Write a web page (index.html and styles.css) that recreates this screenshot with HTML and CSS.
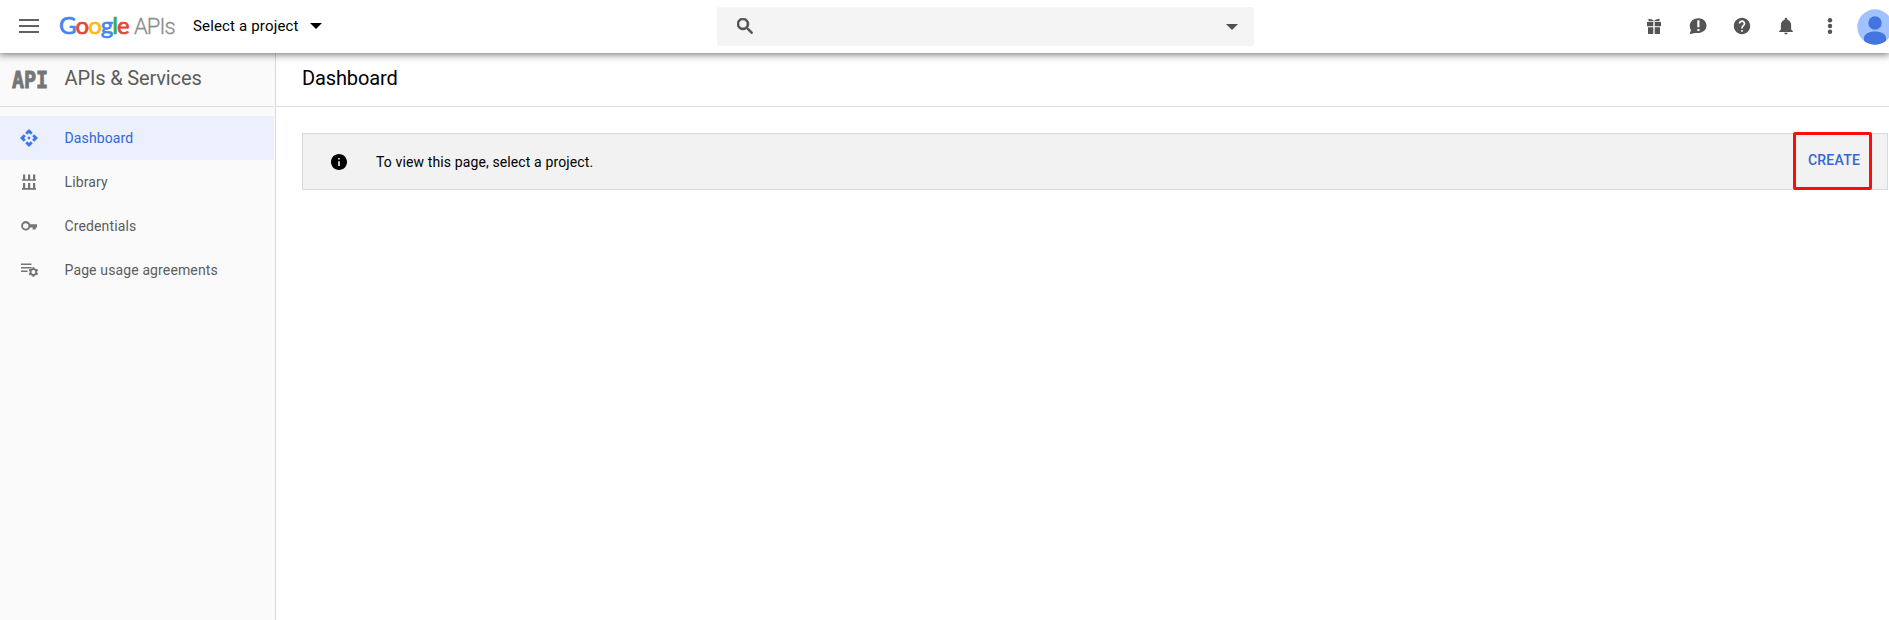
FILE: index.html
```html
<!DOCTYPE html>
<html lang="en">
<head>
<meta charset="utf-8">
<title>APIs &amp; Services</title>
<link rel="stylesheet" href="styles.css">
</head>
<body>
<header class="topbar">
  <svg class="menu" viewBox="0 0 20 14"><path d="M0 0h20v2H0zM0 6h20v2H0zM0 12h20v2H0z"/></svg>
  <div class="logo"><span class="google"><span class="blue">G</span><span class="red">o</span><span class="yellow">o</span><span class="blue">g</span><span class="green">l</span><span class="red">e</span></span><span class="apis">APIs</span></div>
  <div class="project"><span class="project-name">Select a project</span><svg class="caret" viewBox="0 0 12 6"><path d="M0 0h12L6 6z"/></svg></div>
  <div class="search">
    <svg class="search-icon" viewBox="3 3 17.5 17.5"><path stroke="currentColor" stroke-width=".8" d="M15.5 14h-.79l-.28-.27A6.471 6.471 0 0 0 16 9.5 6.5 6.5 0 1 0 9.5 16c1.61 0 3.09-.59 4.23-1.57l.27.28v.79l5 4.99L20.49 19l-4.99-5zm-6 0C7.01 14 5 11.99 5 9.5S7.01 5 9.5 5 14 7.01 14 9.5 11.99 14 9.5 14z"/></svg>
    <svg class="search-caret" viewBox="0 0 12 6"><path d="M0 0h12L6 6z"/></svg>
  </div>
  <div class="tools">
    <svg viewBox="0 0 18 18"><path d="M2 5h6.3v4.3H2zM9.7 5H16v4.3H9.700zM3 10.300h5.300V17H3zM9.700 10.300H15V17H9.700zM3.500 1.700L7 2.600 9 4l2-1.400 3.500-.9v2.500h-11z"/></svg>
    <svg viewBox="0 0 18 18"><path fill-rule="evenodd" d="M9.500 1.200c4.500 0 8 3.200 8 7.400s-3.500 7.300-8 7.300H5.800L.5 17.300l1.500-4C1.300 12 .8 10.400.8 8.600c0-4.200 4.200-7.400 8.700-7.400zM8.300 3.200v7.100h2.200V3.200zM8.300 11.900V14h2.200v-2.100z"/></svg>
    <svg viewBox="1 1 22 22"><path d="M12 2C6.480 2 2 6.480 2 12s4.480 10 10 10 10-4.480 10-10S17.520 2 12 2zm1 17h-2v-2h2v2zm2.070-7.750l-.9.920C13.450 12.900 13 13.500 13 15h-2v-.5c0-1.100.450-2.100 1.170-2.830l1.240-1.260c.370-.360.590-.860.590-1.410 0-1.100-.9-2-2-2s-2 .9-2 2H8c0-2.210 1.790-4 4-4s4 1.790 4 4c0 .880-.360 1.680-.930 2.250z"/></svg>
    <svg viewBox="1.500 1.500 21 21"><path d="M12 22c1.100 0 2-.9 2-2h-4c0 1.100.890 2 2 2zm6-6v-5c0-3.070-1.640-5.640-4.500-6.320V4c0-.830-.670-1.500-1.500-1.500s-1.500.670-1.500 1.500v.680C7.630 5.360 6 7.920 6 11v5l-2 2v1h16v-1l-2-2z"/></svg>
    <svg viewBox="0 0 18 18"><circle cx="9" cy="3.300" r="2.200"/><circle cx="9" cy="9" r="2.200"/><circle cx="9" cy="14.700" r="2.200"/></svg>
  </div>
  <svg class="avatar" viewBox="0 0 36 36"><defs><clipPath id="disc"><circle cx="18" cy="18" r="17.700"/></clipPath></defs><circle cx="18" cy="18" r="17.700" fill="#a0c3ff"/><g fill="#4374e0" clip-path="url(#disc)"><circle cx="18" cy="14" r="6.700"/><path d="M7 40V29c0-4 5-6.500 11-6.500S29 25 29 29v11z"/></g></svg>
</header>
<div class="body">
  <aside class="sidebar">
    <div class="side-head"><span class="api-mark">API</span><span class="side-title">APIs &amp; Services</span></div>
    <nav class="nav">
      <a class="item active"><svg viewBox="1 1 22 22"><path d="M14 12l-2 2-2-2 2-2 2 2zm-2-6l2.120 2.120 2.500-2.500L12 1 7.380 5.620l2.500 2.500L12 6zm-6 6l2.120-2.120-2.500-2.500L1 12l4.620 4.620 2.500-2.500L6 12zm12 0l-2.120 2.120 2.500 2.500L23 12l-4.620-4.620-2.500 2.500L18 12zm-6 6l-2.120-2.120-2.500 2.500L12 23l4.620-4.620-2.500-2.500L12 18z"/></svg><span>Dashboard</span></a>
      <a class="item"><svg viewBox="0 0 18 18"><path d="M3 1.400h2.200v5H3zM8 1.400h2.200v5H8zM13 1.400h2.200v5H13zM2 6.200h14v1.600H2zM3 10h2.200v5H3zM8 10h2.200v5H8zM13 10h2.200v5H13zM2 15h14v1.800H2z"/></svg><span>Library</span></a>
      <a class="item"><svg viewBox="0 0 18 18"><path fill-rule="evenodd" d="M10.200 7.200H17v3.200h-1.200v2.200h-3.200v-2.200h-2.400A4.700 4.700 0 1 1 10.200 7.200zM5.700 6.200a2.700 2.700 0 1 0 0 5.400 2.700 2.700 0 0 0 0-5.400z"/></svg><span>Credentials</span></a>
      <a class="item"><svg viewBox="0 0 18 18"><path d="M1 2.500h10.500V4H1zM1 6h10.500v1.600H1zM1 9.500h6.500v1.600H1z"/><circle cx="13.400" cy="11" r="2.900" fill="none" stroke="currentColor" stroke-width="1.900"/><path d="M12.300 6.300h2.200v2h-2.200zM12.300 13.700h2.200v2h-2.200zM8.700 9.500l1-1.900 1.900 1-1 1.900zM15.200 13.300l1-1.900 1.900 1-1 1.900zM15.200 8.700l1.900-1 1 1.900-1.900 1zM8.700 12.500l1.900-1 1 1.900-1.900 1z"/></svg><span>Page usage agreements</span></a>
    </nav>
  </aside>
  <main class="main">
    <h1 class="title">Dashboard</h1>
    <section class="notice">
      <svg class="info" viewBox="2 2 20 20"><path d="M12 2C6.480 2 2 6.480 2 12s4.480 10 10 10 10-4.480 10-10S17.520 2 12 2zm1 15h-2v-6h2v6zm0-8h-2V7h2v2z"/></svg>
      <span class="message">To view this page, select a project.</span>
      <div class="create">CREATE</div>
    </section>
  </main>
</div>
</body>
</html>
```
FILE: styles.css
```css
* { box-sizing: border-box; }
body { margin: 0; height: 620px; overflow: hidden; display: flex; flex-direction: column; font-family: Roboto, sans-serif; font-size: 14px; color: #000; background: #fff; }
svg { display: block; fill: currentColor; flex: none; }
.topbar { position: relative; z-index: 1; flex: none; display: flex; align-items: center; height: 53px; padding-bottom: 1px; background: #fff; box-shadow: 0 0 8px 1px rgba(0,0,0,.6); clip-path: inset(0 0 -12px 0); }
.topbar > * { flex: none; }
.menu { width: 20px; height: 14px; margin-left: 19px; color: #616161; }
.logo { display: flex; align-items: baseline; width: 134px; margin-left: 20px; margin-bottom: 3px; height: 30px; line-height: 29px; white-space: nowrap; }
.google { width: 75px; font-family: Lato, sans-serif; font-size: 24px; letter-spacing: -.95px; -webkit-text-stroke: .7px; }
.blue { color: #4285f4; }
.red { color: #ea4335; }
.yellow { color: #fbbc05; }
.green { color: #34a853; }
.apis { font-size: 22px; font-weight: 300; letter-spacing: -.9px; color: #8c8c8c; -webkit-text-stroke: .3px; }
.project { display: flex; align-items: center; width: 130px; margin-right: 394px; }
.project-name { width: 117px; flex: none; font-size: 15px; letter-spacing: .16px; white-space: nowrap; }
.caret { width: 12px; height: 6px; }
.search { display: flex; align-items: center; justify-content: space-between; width: 537px; height: 39px; padding: 0 16px 0 20px; margin-top: 1px; background: #f4f4f4; border-radius: 3px; color: #4f4f4f; }
.search-icon { width: 16px; height: 16px; margin-top: -1px; }
.search-caret { width: 12px; height: 6px; }
.tools { display: flex; gap: 26px; margin-left: 391px; color: #545454; }
.tools svg { width: 18px; height: 18px; }
.avatar { width: 36px; height: 36px; margin-left: 17.500px; margin-top: 1px; }
.body { flex: 1; display: flex; min-height: 0; }
.sidebar { width: 276px; flex: none; background: #fafafa; border-right: 1px solid #d9d9d9; color: #5c5c5c; }
.side-head { display: flex; align-items: center; height: 54px; padding-left: 12px; margin-right: 1px; padding-bottom: 3px; border-bottom: 1px solid #dedede; }
.api-mark { width: 52.5px; padding-top: 3px; font: bold 23px "DejaVu Sans Mono", monospace; color: #757575; -webkit-text-stroke: .9px; transform: scaleX(.87); transform-origin: left; }
.side-title { font-size: 20px; letter-spacing: -.14px; white-space: nowrap; }
.nav { padding-top: 9px; margin-right: 1px; }
.item { display: flex; align-items: center; gap: 26.5px; height: 44px; padding-left: 20px; letter-spacing: .13px; white-space: nowrap; }
.item svg { width: 18px; height: 18px; color: #757575; }
.item.active { background: #ebf0fc; color: #3367d6; }
.item.active svg { color: #3b78e7; }
.main { flex: 1; min-width: 0; }
.title { height: 54px; margin: 0; padding: 0 26px 3px; line-height: 50px; font-size: 20px; font-weight: 400; letter-spacing: -.12px; border-bottom: 1px solid #dedede; }
.notice { display: flex; align-items: center; height: 57px; margin: 26px 1px 0 26px; padding-left: 28px; border: 1px solid #d9d9d9; background: #f2f2f2; }
.info { width: 16px; height: 16px; }
.message { margin-left: 29px; letter-spacing: .12px; }
.create { display: flex; align-items: center; justify-content: center; width: 79px; height: 58px; margin: -2px 15px 0 auto; padding: 0 0 1px 3px; border: 3px solid #fc0d0d; border-radius: 2px; font-weight: 500; letter-spacing: .25px; color: #3367d6; }
```
